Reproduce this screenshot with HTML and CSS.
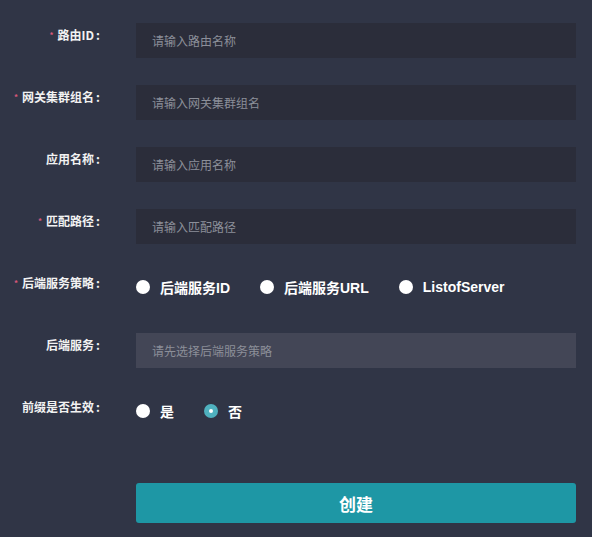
FILE: index.html
```html
<!DOCTYPE html>
<html lang="zh-CN">
<head>
  <meta charset="UTF-8">
  <meta name="viewport" content="width=device-width, initial-scale=1.0">
  <title>创建路由</title>
  <link rel="stylesheet" href="styles.css">
</head>
<body>
  <form class="route-form">
    <div class="form-row">
      <label class="form-label required">路由ID</label>
      <input class="form-input" type="text" placeholder="请输入路由名称">
    </div>
    <div class="form-row">
      <label class="form-label required">网关集群组名</label>
      <input class="form-input" type="text" placeholder="请输入网关集群组名">
    </div>
    <div class="form-row">
      <label class="form-label">应用名称</label>
      <input class="form-input" type="text" placeholder="请输入应用名称">
    </div>
    <div class="form-row">
      <label class="form-label required">匹配路径</label>
      <input class="form-input" type="text" placeholder="请输入匹配路径">
    </div>
    <div class="form-row">
      <label class="form-label required">后端服务策略</label>
      <div class="radio-group">
        <label class="radio"><span class="radio-dot"></span>后端服务ID</label>
        <label class="radio"><span class="radio-dot"></span>后端服务URL</label>
        <label class="radio"><span class="radio-dot"></span>ListofServer</label>
      </div>
    </div>
    <div class="form-row">
      <label class="form-label">后端服务</label>
      <input class="form-input" type="text" placeholder="请先选择后端服务策略" disabled>
    </div>
    <div class="form-row">
      <label class="form-label">前缀是否生效</label>
      <div class="radio-group">
        <label class="radio"><span class="radio-dot"></span>是</label>
        <label class="radio"><span class="radio-dot checked"></span>否</label>
      </div>
    </div>
    <div class="form-actions">
      <button class="submit-button" type="button">创建</button>
    </div>
  </form>
</body>
</html>
```

FILE: styles.css
```css
body {
  margin: 0;
  background: #303546;
  font-family: "Noto Sans CJK SC", "Liberation Sans", sans-serif;
  color: #ffffff;
}

.route-form {
  padding: 23px 16px 14px 0;
}

.form-row {
  display: flex;
  align-items: flex-start;
  gap: 36px;
  height: 35px;
  margin-bottom: 27px;
}

.form-label {
  width: 100px;
  flex-shrink: 0;
  text-align: right;
  font-size: 12px;
  font-weight: bold;
  line-height: 24px;
  color: #f2f2f2;
}

.form-label.required::before {
  content: "*";
  color: #d9587a;
  font-size: 8px;
  margin-right: 4px;
  vertical-align: 2px;
}

.form-label::after {
  content: ":";
  margin-left: 2px;
}

.form-input {
  flex: 1;
  height: 35px;
  box-sizing: border-box;
  border: none;
  outline: none;
  padding: 0 16px;
  background: #2b2d3a;
  color: #ffffff;
  font-family: inherit;
  font-size: 12px;
}

.form-input::placeholder {
  color: #8c8f99;
}

.form-input:disabled {
  background: #434656;
}

.radio-group {
  display: flex;
  align-items: center;
  height: 32px;
}

.radio {
  display: flex;
  align-items: center;
  font-size: 14px;
  font-weight: bold;
  margin-right: 30px;
  font-family: "Liberation Sans", "Noto Sans CJK SC", sans-serif;
}

.radio-dot {
  width: 14px;
  height: 14px;
  border-radius: 50%;
  background: #ffffff;
  margin-right: 10px;
  display: flex;
  align-items: center;
  justify-content: center;
}

.radio-dot.checked {
  background: #4fb1bf;
}

.radio-dot.checked::after {
  content: "";
  width: 4px;
  height: 4px;
  border-radius: 50%;
  background: #ffffff;
}

.form-actions {
  padding: 26px 0 0 136px;
}

.submit-button {
  width: 100%;
  height: 40px;
  border: none;
  border-radius: 3px;
  background: #1e97a5;
  color: #ffffff;
  font-family: inherit;
  font-size: 17px;
  font-weight: bold;
  cursor: pointer;
}
```
